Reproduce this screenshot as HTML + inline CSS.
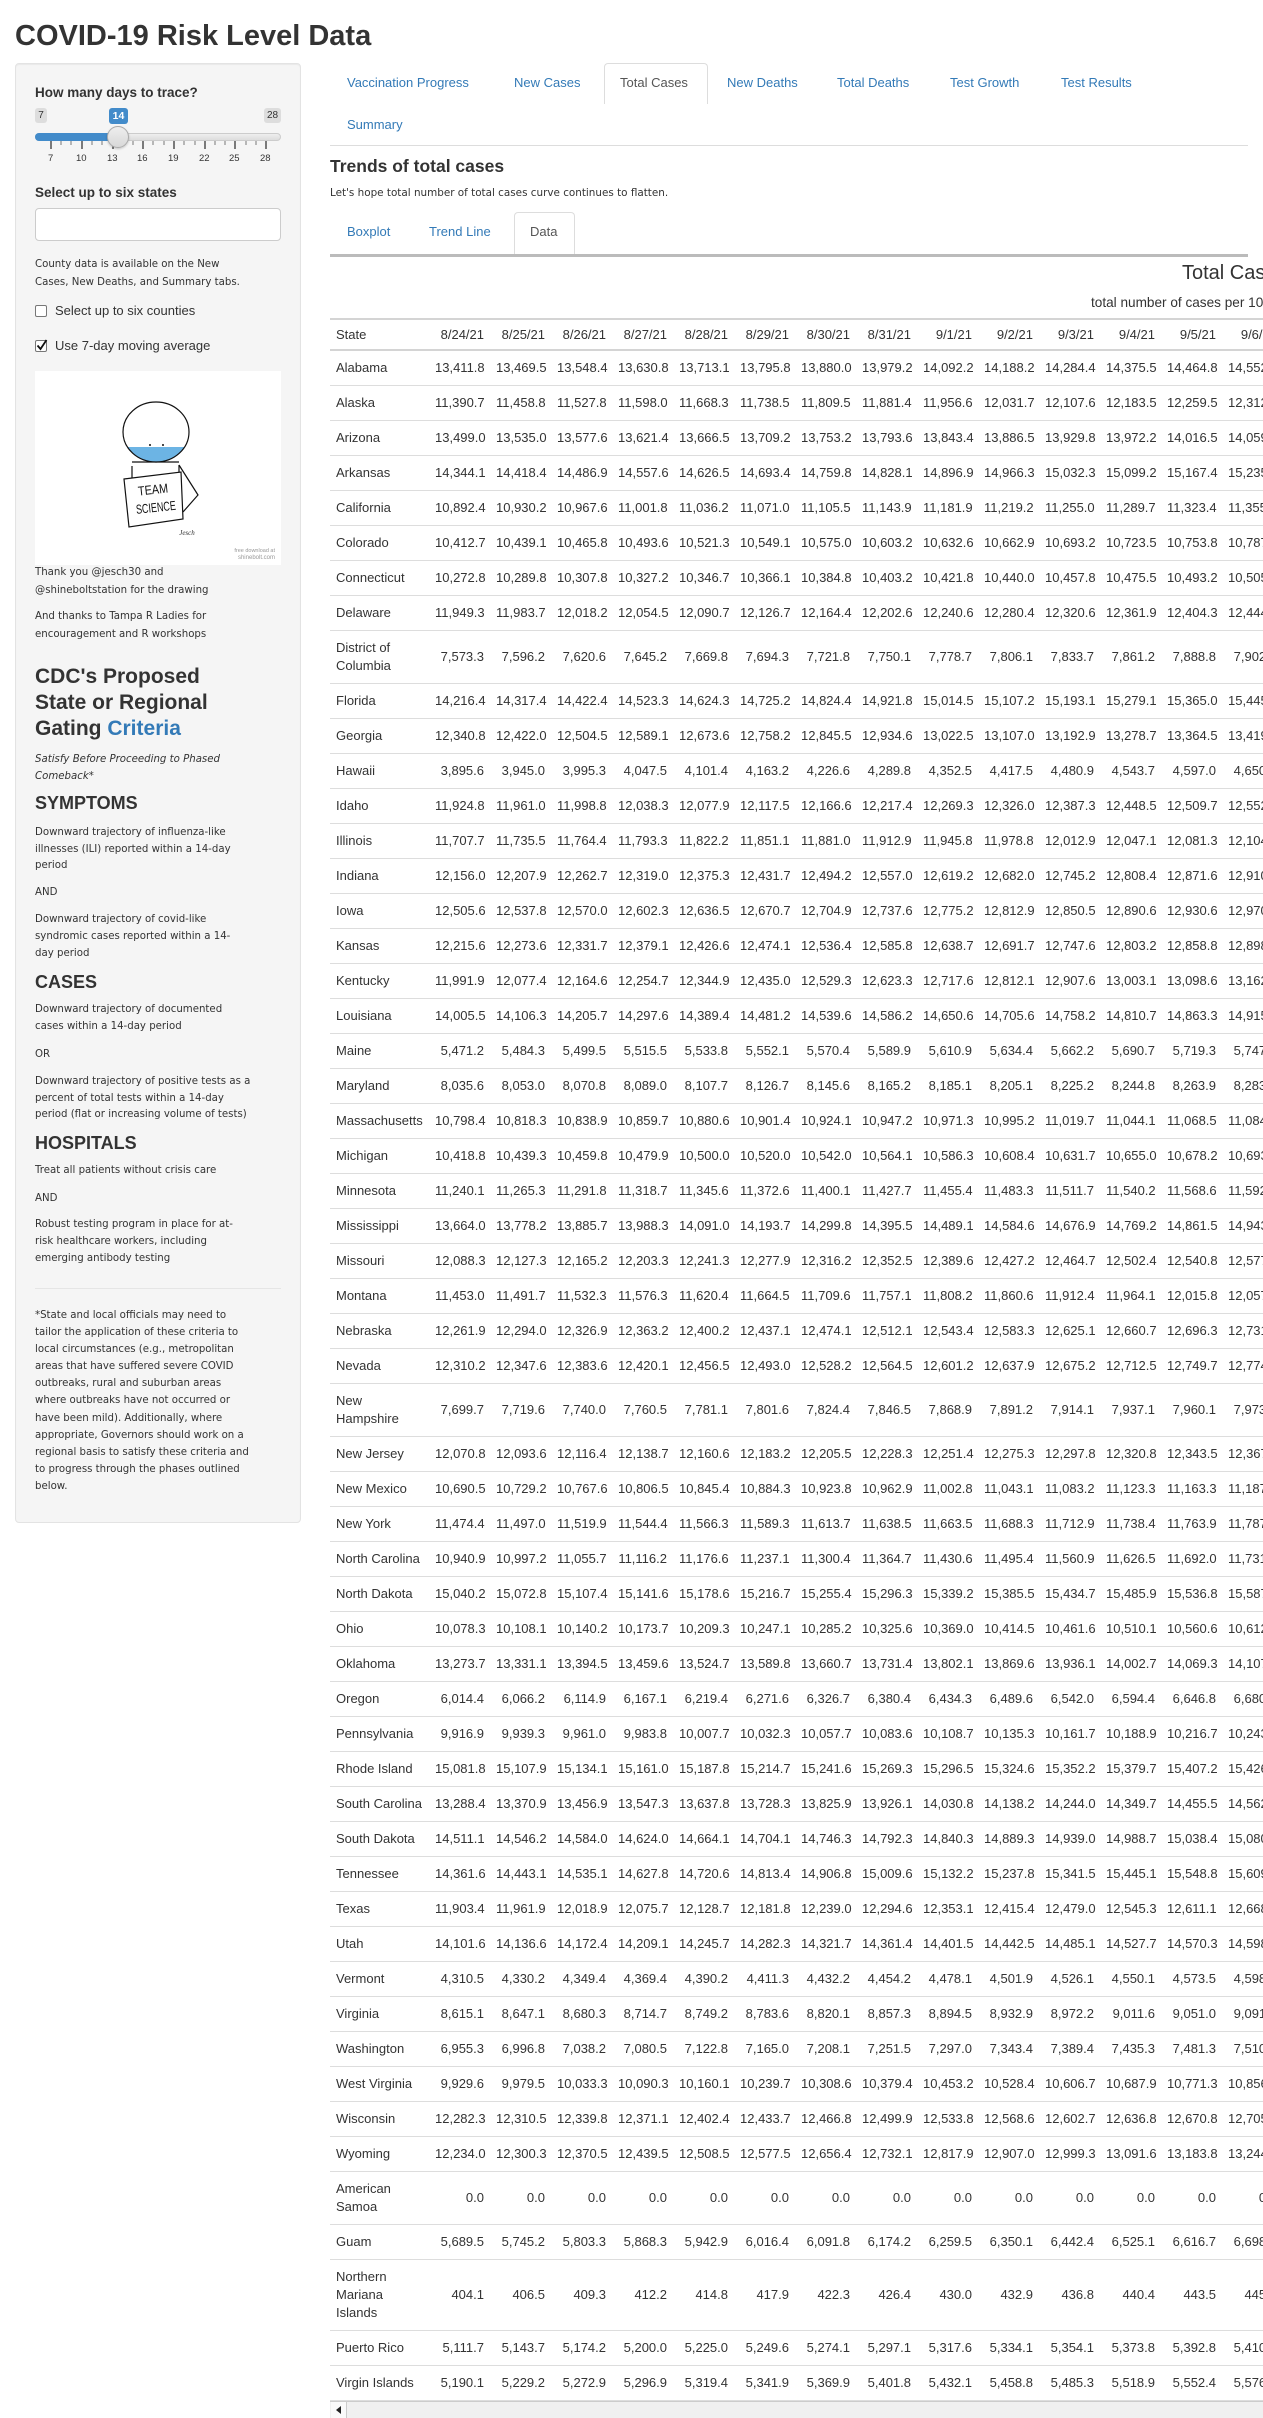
<!DOCTYPE html>
<html><head><meta charset="utf-8">
<style>
*{box-sizing:border-box}
html,body{margin:0;padding:0}
body{width:1263px;height:2418px;overflow:hidden;position:relative;background:#fff;color:#333;font-family:"Liberation Sans",Arial,sans-serif}
.a{position:absolute;white-space:nowrap}
.lu{font-family:"DejaVu Sans",sans-serif;font-size:10.2px;line-height:17px;color:#333}
.h{font-family:"Liberation Sans",Arial,sans-serif;font-weight:bold;color:#333}
.tab{position:absolute;font-size:13px;color:#337ab7;line-height:18px;white-space:nowrap}
.tabbox{position:absolute;border:1px solid #ddd;border-bottom:none;border-radius:4px 4px 0 0;background:#fff}
#tw{position:absolute;left:330px;top:318px;width:933px;height:2084px;overflow:hidden}
table{border-collapse:collapse;table-layout:fixed;width:953px;font-family:"Liberation Sans",Arial,sans-serif;font-size:13px;color:#333}
col.s{width:99px}col.d{width:61px}
th{font-weight:normal;text-align:right;padding:6px 6px 5px;line-height:18px;border-top:2px solid #d4d4d4;border-bottom:2px solid #d4d4d4;white-space:nowrap}
th:first-child{text-align:left}
td{text-align:right;padding:8px 6px;line-height:18px;border-bottom:1px solid #ddd;white-space:nowrap}
td:first-child{text-align:left;white-space:normal}
</style></head><body>

<div class="a h" style="left:15px;top:18px;font-size:29px;line-height:36px">COVID-19 Risk Level Data</div>

<!-- sidebar -->
<div class="a" style="left:15px;top:63px;width:286px;height:1460px;background:#f5f5f5;border:1px solid #e3e3e3;border-radius:4px;box-shadow:inset 0 1px 1px rgba(0,0,0,.05)"></div>
<div class="a h" style="left:35px;top:84px;font-size:13.5px;line-height:18px">How many days to trace?</div>
<div class="a" style="left:35px;top:108px;width:12px;height:15px;background:#ddd;border-radius:3px;font-size:10px;line-height:15px;text-align:center;color:#333">7</div>
<div class="a" style="left:109px;top:108px;width:19px;height:16px;background:#428bca;border-radius:3px;font-size:10.5px;line-height:16px;text-align:center;color:#fff;font-weight:bold">14</div>
<div class="a" style="left:264px;top:108px;width:17px;height:15px;background:#ddd;border-radius:3px;font-size:10px;line-height:15px;text-align:center;color:#333">28</div>
<div class="a" style="left:35px;top:133px;width:246px;height:8px;background:linear-gradient(#eee,#ddd);border:1px solid #ccc;border-radius:4px"></div>
<div class="a" style="left:35px;top:133px;width:84px;height:8px;background:#428bca;border-radius:4px 0 0 4px"></div>
<svg class="a" style="left:35px;top:140px" width="250" height="12">
<g stroke="#000" stroke-width="1">
<path d="M16 1v8M47 1v8M78 1v8M108 1v8M139 1v8M170 1v8M200 1v8M231 1v8"/>
<path stroke="#777" d="M26 1v4M36 1v4M57 1v4M67 1v4M88 1v4M98 1v4M118 1v4M129 1v4M149 1v4M160 1v4M180 1v4M190 1v4M211 1v4M221 1v4"/>
</g></svg>
<div class="a" style="left:107px;top:126px;width:22px;height:22px;border-radius:50%;background:linear-gradient(#eee,#d8d8d8);border:1px solid #aaa;box-shadow:0 1px 2px rgba(0,0,0,.2)"></div>
<div class="a" style="left:35px;top:153px;width:260px;font-size:9.5px;line-height:12px;color:#333">
<span class="a" style="left:13px">7</span><span class="a" style="left:41px">10</span><span class="a" style="left:72px">13</span><span class="a" style="left:102px">16</span><span class="a" style="left:133px">19</span><span class="a" style="left:164px">22</span><span class="a" style="left:194px">25</span><span class="a" style="left:225px">28</span></div>

<div class="a h" style="left:35px;top:184px;font-size:13.5px;line-height:18px">Select up to six states</div>
<div class="a" style="left:35px;top:208px;width:246px;height:33px;background:#fff;border:1px solid #ccc;border-radius:4px"></div>
<div class="a lu" style="left:35px;top:256px;line-height:18px">County data is available on the New<br>Cases, New Deaths, and Summary tabs.</div>
<div class="a" style="left:35px;top:305px;width:12px;height:12px;border:1px solid #777;background:#fff;border-radius:2px"></div>
<div class="a" style="left:55px;top:302px;font-size:13px;line-height:18px">Select up to six counties</div>
<div class="a" style="left:35px;top:340px;width:12px;height:12px;border:1px solid #777;background:#fff;border-radius:2px"></div>
<svg class="a" style="left:35px;top:338px" width="14" height="14"><path d="M2.5 7.5l3 3.5 6-9" fill="none" stroke="#111" stroke-width="1.8"/></svg>
<div class="a" style="left:55px;top:337px;font-size:13px;line-height:18px">Use 7-day moving average</div>

<svg class="a" style="left:35px;top:371px" width="246" height="194">
<rect width="246" height="194" fill="#fff"/>
<g fill="none" stroke="#111" stroke-width="1.2">
<path d="M97 95V108M144 94V101M97 91H144"/>
<path d="M144 94L163 124L148 141"/>
</g>
<path d="M92.4 76 A33 30 0 0 0 149.6 76 Z" fill="#6cb4e4"/>
<ellipse cx="121" cy="61" rx="33" ry="30" fill="none" stroke="#111" stroke-width="1.2"/>
<circle cx="115" cy="74" r="1" fill="#111"/><circle cx="128" cy="74" r="1" fill="#111"/>
<path d="M89 108L146 101L148 148L94 156Z" fill="#fff" stroke="#111" stroke-width="1.2"/>
<g transform="rotate(-6 119 128)" font-family="Liberation Sans Narrow,Liberation Sans,sans-serif" fill="#111" font-size="13" text-anchor="middle">
<text x="119" y="123" textLength="30" lengthAdjust="spacingAndGlyphs">TEAM</text>
<text x="120" y="141" textLength="40" lengthAdjust="spacingAndGlyphs">SCIENCE</text></g>
<text x="152" y="164" font-size="7" font-style="italic" fill="#333" text-anchor="middle" font-family="Liberation Serif,serif">Jesch</text>
<text x="240" y="181" font-size="5.5" fill="#999" text-anchor="end" font-family="Liberation Sans,sans-serif">free download at</text>
<text x="240" y="188" font-size="6" fill="#999" text-anchor="end" font-family="Liberation Sans,sans-serif">shinebolt.com</text>
</svg>

<div class="a lu" style="left:35px;top:564px;line-height:17.5px">Thank you @jesch30 and<br>@shineboltstation for the drawing</div>
<div class="a lu" style="left:35px;top:608px;line-height:17.5px">And thanks to Tampa R Ladies for<br>encouragement and R workshops</div>
<div class="a h" style="left:35px;top:664px;font-size:21px;line-height:26px">CDC's Proposed<br>State or Regional<br>Gating <span style="color:#337ab7">Criteria</span></div>
<div class="a lu" style="left:35px;top:751px;font-style:italic">Satisfy Before Proceeding to Phased<br>Comeback*</div>
<div class="a h" style="left:35px;top:792px;font-size:18px;line-height:22px">SYMPTOMS</div>
<div class="a lu" style="left:35px;top:825px;line-height:16.6px">Downward trajectory of influenza-like<br>illnesses (ILI) reported within a 14-day<br>period</div>
<div class="a lu" style="left:35px;top:884px">AND</div>
<div class="a lu" style="left:35px;top:912px;line-height:16.8px">Downward trajectory of covid-like<br>syndromic cases reported within a 14-<br>day period</div>
<div class="a h" style="left:35px;top:971px;font-size:18px;line-height:22px">CASES</div>
<div class="a lu" style="left:35px;top:1001px">Downward trajectory of documented<br>cases within a 14-day period</div>
<div class="a lu" style="left:35px;top:1046px">OR</div>
<div class="a lu" style="left:35px;top:1074px;line-height:16.6px">Downward trajectory of positive tests as a<br>percent of total tests within a 14-day<br>period (flat or increasing volume of tests)</div>
<div class="a h" style="left:35px;top:1132px;font-size:18px;line-height:22px">HOSPITALS</div>
<div class="a lu" style="left:35px;top:1162px">Treat all patients without crisis care</div>
<div class="a lu" style="left:35px;top:1190px">AND</div>
<div class="a lu" style="left:35px;top:1216px">Robust testing program in place for at-<br>risk healthcare workers, including<br>emerging antibody testing</div>
<div class="a" style="left:35px;top:1288px;width:246px;height:1px;background:#e5e5e5"></div>
<div class="a lu" style="left:35px;top:1307px;line-height:17.1px">*State and local officials may need to<br>tailor the application of these criteria to<br>local circumstances (e.g., metropolitan<br>areas that have suffered severe COVID<br>outbreaks, rural and suburban areas<br>where outbreaks have not occurred or<br>have been mild). Additionally, where<br>appropriate, Governors should work on a<br>regional basis to satisfy these criteria and<br>to progress through the phases outlined<br>below.</div>

<!-- main tabs -->
<div class="tabbox" style="left:604px;top:63px;width:104px;height:41px"></div>
<div class="tab" style="left:347px;top:74px">Vaccination Progress</div>
<div class="tab" style="left:514px;top:74px">New Cases</div>
<div class="tab" style="left:620px;top:74px;color:#555">Total Cases</div>
<div class="tab" style="left:727px;top:74px">New Deaths</div>
<div class="tab" style="left:837px;top:74px">Total Deaths</div>
<div class="tab" style="left:950px;top:74px">Test Growth</div>
<div class="tab" style="left:1061px;top:74px">Test Results</div>
<div class="tab" style="left:347px;top:116px">Summary</div>
<div class="a" style="left:330px;top:145px;width:918px;height:1px;background:#ddd"></div>

<div class="a h" style="left:330px;top:155px;font-size:17.5px;line-height:22px">Trends of total cases</div>
<div class="a lu" style="left:330px;top:185px;font-size:10.4px">Let's hope total number of total cases curve continues to flatten.</div>

<div class="tabbox" style="left:514px;top:212px;width:61px;height:43px"></div>
<div class="tab" style="left:347px;top:223px">Boxplot</div>
<div class="tab" style="left:429px;top:223px">Trend Line</div>
<div class="tab" style="left:530px;top:223px;color:#555">Data</div>
<div class="a" style="left:330px;top:254px;width:918px;height:3px;background:#bbb"></div>

<div class="a" style="left:1000px;top:258px;width:263px;height:58px;overflow:hidden">
<div class="a" style="left:182px;top:3px;font-size:20px;line-height:24px;color:#333">Total Cases</div>
<div class="a" style="left:91px;top:36px;font-size:13.6px;line-height:17px;color:#333">total number of cases per 100,000 people</div>
</div>

<div id="tw"><table>
<colgroup><col class="s"><col class="d"><col class="d"><col class="d"><col class="d"><col class="d"><col class="d"><col class="d"><col class="d"><col class="d"><col class="d"><col class="d"><col class="d"><col class="d"><col class="d"></colgroup>
<thead><tr><th>State</th><th>8/24/21</th><th>8/25/21</th><th>8/26/21</th><th>8/27/21</th><th>8/28/21</th><th>8/29/21</th><th>8/30/21</th><th>8/31/21</th><th>9/1/21</th><th>9/2/21</th><th>9/3/21</th><th>9/4/21</th><th>9/5/21</th><th>9/6/21</th></tr></thead>
<tbody>
<tr><td>Alabama</td><td>13,411.8</td><td>13,469.5</td><td>13,548.4</td><td>13,630.8</td><td>13,713.1</td><td>13,795.8</td><td>13,880.0</td><td>13,979.2</td><td>14,092.2</td><td>14,188.2</td><td>14,284.4</td><td>14,375.5</td><td>14,464.8</td><td>14,552.1</td></tr>
<tr><td>Alaska</td><td>11,390.7</td><td>11,458.8</td><td>11,527.8</td><td>11,598.0</td><td>11,668.3</td><td>11,738.5</td><td>11,809.5</td><td>11,881.4</td><td>11,956.6</td><td>12,031.7</td><td>12,107.6</td><td>12,183.5</td><td>12,259.5</td><td>12,312.0</td></tr>
<tr><td>Arizona</td><td>13,499.0</td><td>13,535.0</td><td>13,577.6</td><td>13,621.4</td><td>13,666.5</td><td>13,709.2</td><td>13,753.2</td><td>13,793.6</td><td>13,843.4</td><td>13,886.5</td><td>13,929.8</td><td>13,972.2</td><td>14,016.5</td><td>14,059.0</td></tr>
<tr><td>Arkansas</td><td>14,344.1</td><td>14,418.4</td><td>14,486.9</td><td>14,557.6</td><td>14,626.5</td><td>14,693.4</td><td>14,759.8</td><td>14,828.1</td><td>14,896.9</td><td>14,966.3</td><td>15,032.3</td><td>15,099.2</td><td>15,167.4</td><td>15,235.0</td></tr>
<tr><td>California</td><td>10,892.4</td><td>10,930.2</td><td>10,967.6</td><td>11,001.8</td><td>11,036.2</td><td>11,071.0</td><td>11,105.5</td><td>11,143.9</td><td>11,181.9</td><td>11,219.2</td><td>11,255.0</td><td>11,289.7</td><td>11,323.4</td><td>11,355.0</td></tr>
<tr><td>Colorado</td><td>10,412.7</td><td>10,439.1</td><td>10,465.8</td><td>10,493.6</td><td>10,521.3</td><td>10,549.1</td><td>10,575.0</td><td>10,603.2</td><td>10,632.6</td><td>10,662.9</td><td>10,693.2</td><td>10,723.5</td><td>10,753.8</td><td>10,787.0</td></tr>
<tr><td>Connecticut</td><td>10,272.8</td><td>10,289.8</td><td>10,307.8</td><td>10,327.2</td><td>10,346.7</td><td>10,366.1</td><td>10,384.8</td><td>10,403.2</td><td>10,421.8</td><td>10,440.0</td><td>10,457.8</td><td>10,475.5</td><td>10,493.2</td><td>10,505.0</td></tr>
<tr><td>Delaware</td><td>11,949.3</td><td>11,983.7</td><td>12,018.2</td><td>12,054.5</td><td>12,090.7</td><td>12,126.7</td><td>12,164.4</td><td>12,202.6</td><td>12,240.6</td><td>12,280.4</td><td>12,320.6</td><td>12,361.9</td><td>12,404.3</td><td>12,444.0</td></tr>
<tr><td>District of Columbia</td><td>7,573.3</td><td>7,596.2</td><td>7,620.6</td><td>7,645.2</td><td>7,669.8</td><td>7,694.3</td><td>7,721.8</td><td>7,750.1</td><td>7,778.7</td><td>7,806.1</td><td>7,833.7</td><td>7,861.2</td><td>7,888.8</td><td>7,902.0</td></tr>
<tr><td>Florida</td><td>14,216.4</td><td>14,317.4</td><td>14,422.4</td><td>14,523.3</td><td>14,624.3</td><td>14,725.2</td><td>14,824.4</td><td>14,921.8</td><td>15,014.5</td><td>15,107.2</td><td>15,193.1</td><td>15,279.1</td><td>15,365.0</td><td>15,445.0</td></tr>
<tr><td>Georgia</td><td>12,340.8</td><td>12,422.0</td><td>12,504.5</td><td>12,589.1</td><td>12,673.6</td><td>12,758.2</td><td>12,845.5</td><td>12,934.6</td><td>13,022.5</td><td>13,107.0</td><td>13,192.9</td><td>13,278.7</td><td>13,364.5</td><td>13,419.0</td></tr>
<tr><td>Hawaii</td><td>3,895.6</td><td>3,945.0</td><td>3,995.3</td><td>4,047.5</td><td>4,101.4</td><td>4,163.2</td><td>4,226.6</td><td>4,289.8</td><td>4,352.5</td><td>4,417.5</td><td>4,480.9</td><td>4,543.7</td><td>4,597.0</td><td>4,650.0</td></tr>
<tr><td>Idaho</td><td>11,924.8</td><td>11,961.0</td><td>11,998.8</td><td>12,038.3</td><td>12,077.9</td><td>12,117.5</td><td>12,166.6</td><td>12,217.4</td><td>12,269.3</td><td>12,326.0</td><td>12,387.3</td><td>12,448.5</td><td>12,509.7</td><td>12,552.0</td></tr>
<tr><td>Illinois</td><td>11,707.7</td><td>11,735.5</td><td>11,764.4</td><td>11,793.3</td><td>11,822.2</td><td>11,851.1</td><td>11,881.0</td><td>11,912.9</td><td>11,945.8</td><td>11,978.8</td><td>12,012.9</td><td>12,047.1</td><td>12,081.3</td><td>12,104.0</td></tr>
<tr><td>Indiana</td><td>12,156.0</td><td>12,207.9</td><td>12,262.7</td><td>12,319.0</td><td>12,375.3</td><td>12,431.7</td><td>12,494.2</td><td>12,557.0</td><td>12,619.2</td><td>12,682.0</td><td>12,745.2</td><td>12,808.4</td><td>12,871.6</td><td>12,910.0</td></tr>
<tr><td>Iowa</td><td>12,505.6</td><td>12,537.8</td><td>12,570.0</td><td>12,602.3</td><td>12,636.5</td><td>12,670.7</td><td>12,704.9</td><td>12,737.6</td><td>12,775.2</td><td>12,812.9</td><td>12,850.5</td><td>12,890.6</td><td>12,930.6</td><td>12,970.0</td></tr>
<tr><td>Kansas</td><td>12,215.6</td><td>12,273.6</td><td>12,331.7</td><td>12,379.1</td><td>12,426.6</td><td>12,474.1</td><td>12,536.4</td><td>12,585.8</td><td>12,638.7</td><td>12,691.7</td><td>12,747.6</td><td>12,803.2</td><td>12,858.8</td><td>12,898.0</td></tr>
<tr><td>Kentucky</td><td>11,991.9</td><td>12,077.4</td><td>12,164.6</td><td>12,254.7</td><td>12,344.9</td><td>12,435.0</td><td>12,529.3</td><td>12,623.3</td><td>12,717.6</td><td>12,812.1</td><td>12,907.6</td><td>13,003.1</td><td>13,098.6</td><td>13,162.0</td></tr>
<tr><td>Louisiana</td><td>14,005.5</td><td>14,106.3</td><td>14,205.7</td><td>14,297.6</td><td>14,389.4</td><td>14,481.2</td><td>14,539.6</td><td>14,586.2</td><td>14,650.6</td><td>14,705.6</td><td>14,758.2</td><td>14,810.7</td><td>14,863.3</td><td>14,915.0</td></tr>
<tr><td>Maine</td><td>5,471.2</td><td>5,484.3</td><td>5,499.5</td><td>5,515.5</td><td>5,533.8</td><td>5,552.1</td><td>5,570.4</td><td>5,589.9</td><td>5,610.9</td><td>5,634.4</td><td>5,662.2</td><td>5,690.7</td><td>5,719.3</td><td>5,747.0</td></tr>
<tr><td>Maryland</td><td>8,035.6</td><td>8,053.0</td><td>8,070.8</td><td>8,089.0</td><td>8,107.7</td><td>8,126.7</td><td>8,145.6</td><td>8,165.2</td><td>8,185.1</td><td>8,205.1</td><td>8,225.2</td><td>8,244.8</td><td>8,263.9</td><td>8,283.0</td></tr>
<tr><td>Massachusetts</td><td>10,798.4</td><td>10,818.3</td><td>10,838.9</td><td>10,859.7</td><td>10,880.6</td><td>10,901.4</td><td>10,924.1</td><td>10,947.2</td><td>10,971.3</td><td>10,995.2</td><td>11,019.7</td><td>11,044.1</td><td>11,068.5</td><td>11,084.0</td></tr>
<tr><td>Michigan</td><td>10,418.8</td><td>10,439.3</td><td>10,459.8</td><td>10,479.9</td><td>10,500.0</td><td>10,520.0</td><td>10,542.0</td><td>10,564.1</td><td>10,586.3</td><td>10,608.4</td><td>10,631.7</td><td>10,655.0</td><td>10,678.2</td><td>10,693.0</td></tr>
<tr><td>Minnesota</td><td>11,240.1</td><td>11,265.3</td><td>11,291.8</td><td>11,318.7</td><td>11,345.6</td><td>11,372.6</td><td>11,400.1</td><td>11,427.7</td><td>11,455.4</td><td>11,483.3</td><td>11,511.7</td><td>11,540.2</td><td>11,568.6</td><td>11,592.0</td></tr>
<tr><td>Mississippi</td><td>13,664.0</td><td>13,778.2</td><td>13,885.7</td><td>13,988.3</td><td>14,091.0</td><td>14,193.7</td><td>14,299.8</td><td>14,395.5</td><td>14,489.1</td><td>14,584.6</td><td>14,676.9</td><td>14,769.2</td><td>14,861.5</td><td>14,943.0</td></tr>
<tr><td>Missouri</td><td>12,088.3</td><td>12,127.3</td><td>12,165.2</td><td>12,203.3</td><td>12,241.3</td><td>12,277.9</td><td>12,316.2</td><td>12,352.5</td><td>12,389.6</td><td>12,427.2</td><td>12,464.7</td><td>12,502.4</td><td>12,540.8</td><td>12,577.0</td></tr>
<tr><td>Montana</td><td>11,453.0</td><td>11,491.7</td><td>11,532.3</td><td>11,576.3</td><td>11,620.4</td><td>11,664.5</td><td>11,709.6</td><td>11,757.1</td><td>11,808.2</td><td>11,860.6</td><td>11,912.4</td><td>11,964.1</td><td>12,015.8</td><td>12,057.0</td></tr>
<tr><td>Nebraska</td><td>12,261.9</td><td>12,294.0</td><td>12,326.9</td><td>12,363.2</td><td>12,400.2</td><td>12,437.1</td><td>12,474.1</td><td>12,512.1</td><td>12,543.4</td><td>12,583.3</td><td>12,625.1</td><td>12,660.7</td><td>12,696.3</td><td>12,731.0</td></tr>
<tr><td>Nevada</td><td>12,310.2</td><td>12,347.6</td><td>12,383.6</td><td>12,420.1</td><td>12,456.5</td><td>12,493.0</td><td>12,528.2</td><td>12,564.5</td><td>12,601.2</td><td>12,637.9</td><td>12,675.2</td><td>12,712.5</td><td>12,749.7</td><td>12,774.0</td></tr>
<tr><td>New Hampshire</td><td>7,699.7</td><td>7,719.6</td><td>7,740.0</td><td>7,760.5</td><td>7,781.1</td><td>7,801.6</td><td>7,824.4</td><td>7,846.5</td><td>7,868.9</td><td>7,891.2</td><td>7,914.1</td><td>7,937.1</td><td>7,960.1</td><td>7,973.0</td></tr>
<tr><td>New Jersey</td><td>12,070.8</td><td>12,093.6</td><td>12,116.4</td><td>12,138.7</td><td>12,160.6</td><td>12,183.2</td><td>12,205.5</td><td>12,228.3</td><td>12,251.4</td><td>12,275.3</td><td>12,297.8</td><td>12,320.8</td><td>12,343.5</td><td>12,367.0</td></tr>
<tr><td>New Mexico</td><td>10,690.5</td><td>10,729.2</td><td>10,767.6</td><td>10,806.5</td><td>10,845.4</td><td>10,884.3</td><td>10,923.8</td><td>10,962.9</td><td>11,002.8</td><td>11,043.1</td><td>11,083.2</td><td>11,123.3</td><td>11,163.3</td><td>11,187.0</td></tr>
<tr><td>New York</td><td>11,474.4</td><td>11,497.0</td><td>11,519.9</td><td>11,544.4</td><td>11,566.3</td><td>11,589.3</td><td>11,613.7</td><td>11,638.5</td><td>11,663.5</td><td>11,688.3</td><td>11,712.9</td><td>11,738.4</td><td>11,763.9</td><td>11,787.0</td></tr>
<tr><td>North Carolina</td><td>10,940.9</td><td>10,997.2</td><td>11,055.7</td><td>11,116.2</td><td>11,176.6</td><td>11,237.1</td><td>11,300.4</td><td>11,364.7</td><td>11,430.6</td><td>11,495.4</td><td>11,560.9</td><td>11,626.5</td><td>11,692.0</td><td>11,731.0</td></tr>
<tr><td>North Dakota</td><td>15,040.2</td><td>15,072.8</td><td>15,107.4</td><td>15,141.6</td><td>15,178.6</td><td>15,216.7</td><td>15,255.4</td><td>15,296.3</td><td>15,339.2</td><td>15,385.5</td><td>15,434.7</td><td>15,485.9</td><td>15,536.8</td><td>15,587.0</td></tr>
<tr><td>Ohio</td><td>10,078.3</td><td>10,108.1</td><td>10,140.2</td><td>10,173.7</td><td>10,209.3</td><td>10,247.1</td><td>10,285.2</td><td>10,325.6</td><td>10,369.0</td><td>10,414.5</td><td>10,461.6</td><td>10,510.1</td><td>10,560.6</td><td>10,612.0</td></tr>
<tr><td>Oklahoma</td><td>13,273.7</td><td>13,331.1</td><td>13,394.5</td><td>13,459.6</td><td>13,524.7</td><td>13,589.8</td><td>13,660.7</td><td>13,731.4</td><td>13,802.1</td><td>13,869.6</td><td>13,936.1</td><td>14,002.7</td><td>14,069.3</td><td>14,107.0</td></tr>
<tr><td>Oregon</td><td>6,014.4</td><td>6,066.2</td><td>6,114.9</td><td>6,167.1</td><td>6,219.4</td><td>6,271.6</td><td>6,326.7</td><td>6,380.4</td><td>6,434.3</td><td>6,489.6</td><td>6,542.0</td><td>6,594.4</td><td>6,646.8</td><td>6,680.0</td></tr>
<tr><td>Pennsylvania</td><td>9,916.9</td><td>9,939.3</td><td>9,961.0</td><td>9,983.8</td><td>10,007.7</td><td>10,032.3</td><td>10,057.7</td><td>10,083.6</td><td>10,108.7</td><td>10,135.3</td><td>10,161.7</td><td>10,188.9</td><td>10,216.7</td><td>10,243.0</td></tr>
<tr><td>Rhode Island</td><td>15,081.8</td><td>15,107.9</td><td>15,134.1</td><td>15,161.0</td><td>15,187.8</td><td>15,214.7</td><td>15,241.6</td><td>15,269.3</td><td>15,296.5</td><td>15,324.6</td><td>15,352.2</td><td>15,379.7</td><td>15,407.2</td><td>15,426.0</td></tr>
<tr><td>South Carolina</td><td>13,288.4</td><td>13,370.9</td><td>13,456.9</td><td>13,547.3</td><td>13,637.8</td><td>13,728.3</td><td>13,825.9</td><td>13,926.1</td><td>14,030.8</td><td>14,138.2</td><td>14,244.0</td><td>14,349.7</td><td>14,455.5</td><td>14,562.0</td></tr>
<tr><td>South Dakota</td><td>14,511.1</td><td>14,546.2</td><td>14,584.0</td><td>14,624.0</td><td>14,664.1</td><td>14,704.1</td><td>14,746.3</td><td>14,792.3</td><td>14,840.3</td><td>14,889.3</td><td>14,939.0</td><td>14,988.7</td><td>15,038.4</td><td>15,080.0</td></tr>
<tr><td>Tennessee</td><td>14,361.6</td><td>14,443.1</td><td>14,535.1</td><td>14,627.8</td><td>14,720.6</td><td>14,813.4</td><td>14,906.8</td><td>15,009.6</td><td>15,132.2</td><td>15,237.8</td><td>15,341.5</td><td>15,445.1</td><td>15,548.8</td><td>15,609.0</td></tr>
<tr><td>Texas</td><td>11,903.4</td><td>11,961.9</td><td>12,018.9</td><td>12,075.7</td><td>12,128.7</td><td>12,181.8</td><td>12,239.0</td><td>12,294.6</td><td>12,353.1</td><td>12,415.4</td><td>12,479.0</td><td>12,545.3</td><td>12,611.1</td><td>12,668.0</td></tr>
<tr><td>Utah</td><td>14,101.6</td><td>14,136.6</td><td>14,172.4</td><td>14,209.1</td><td>14,245.7</td><td>14,282.3</td><td>14,321.7</td><td>14,361.4</td><td>14,401.5</td><td>14,442.5</td><td>14,485.1</td><td>14,527.7</td><td>14,570.3</td><td>14,598.0</td></tr>
<tr><td>Vermont</td><td>4,310.5</td><td>4,330.2</td><td>4,349.4</td><td>4,369.4</td><td>4,390.2</td><td>4,411.3</td><td>4,432.2</td><td>4,454.2</td><td>4,478.1</td><td>4,501.9</td><td>4,526.1</td><td>4,550.1</td><td>4,573.5</td><td>4,598.0</td></tr>
<tr><td>Virginia</td><td>8,615.1</td><td>8,647.1</td><td>8,680.3</td><td>8,714.7</td><td>8,749.2</td><td>8,783.6</td><td>8,820.1</td><td>8,857.3</td><td>8,894.5</td><td>8,932.9</td><td>8,972.2</td><td>9,011.6</td><td>9,051.0</td><td>9,091.0</td></tr>
<tr><td>Washington</td><td>6,955.3</td><td>6,996.8</td><td>7,038.2</td><td>7,080.5</td><td>7,122.8</td><td>7,165.0</td><td>7,208.1</td><td>7,251.5</td><td>7,297.0</td><td>7,343.4</td><td>7,389.4</td><td>7,435.3</td><td>7,481.3</td><td>7,510.0</td></tr>
<tr><td>West Virginia</td><td>9,929.6</td><td>9,979.5</td><td>10,033.3</td><td>10,090.3</td><td>10,160.1</td><td>10,239.7</td><td>10,308.6</td><td>10,379.4</td><td>10,453.2</td><td>10,528.4</td><td>10,606.7</td><td>10,687.9</td><td>10,771.3</td><td>10,856.0</td></tr>
<tr><td>Wisconsin</td><td>12,282.3</td><td>12,310.5</td><td>12,339.8</td><td>12,371.1</td><td>12,402.4</td><td>12,433.7</td><td>12,466.8</td><td>12,499.9</td><td>12,533.8</td><td>12,568.6</td><td>12,602.7</td><td>12,636.8</td><td>12,670.8</td><td>12,705.0</td></tr>
<tr><td>Wyoming</td><td>12,234.0</td><td>12,300.3</td><td>12,370.5</td><td>12,439.5</td><td>12,508.5</td><td>12,577.5</td><td>12,656.4</td><td>12,732.1</td><td>12,817.9</td><td>12,907.0</td><td>12,999.3</td><td>13,091.6</td><td>13,183.8</td><td>13,244.0</td></tr>
<tr><td>American Samoa</td><td>0.0</td><td>0.0</td><td>0.0</td><td>0.0</td><td>0.0</td><td>0.0</td><td>0.0</td><td>0.0</td><td>0.0</td><td>0.0</td><td>0.0</td><td>0.0</td><td>0.0</td><td>0.0</td></tr>
<tr><td>Guam</td><td>5,689.5</td><td>5,745.2</td><td>5,803.3</td><td>5,868.3</td><td>5,942.9</td><td>6,016.4</td><td>6,091.8</td><td>6,174.2</td><td>6,259.5</td><td>6,350.1</td><td>6,442.4</td><td>6,525.1</td><td>6,616.7</td><td>6,698.0</td></tr>
<tr><td>Northern Mariana Islands</td><td>404.1</td><td>406.5</td><td>409.3</td><td>412.2</td><td>414.8</td><td>417.9</td><td>422.3</td><td>426.4</td><td>430.0</td><td>432.9</td><td>436.8</td><td>440.4</td><td>443.5</td><td>445.9</td></tr>
<tr><td>Puerto Rico</td><td>5,111.7</td><td>5,143.7</td><td>5,174.2</td><td>5,200.0</td><td>5,225.0</td><td>5,249.6</td><td>5,274.1</td><td>5,297.1</td><td>5,317.6</td><td>5,334.1</td><td>5,354.1</td><td>5,373.8</td><td>5,392.8</td><td>5,410.0</td></tr>
<tr><td>Virgin Islands</td><td>5,190.1</td><td>5,229.2</td><td>5,272.9</td><td>5,296.9</td><td>5,319.4</td><td>5,341.9</td><td>5,369.9</td><td>5,401.8</td><td>5,432.1</td><td>5,458.8</td><td>5,485.3</td><td>5,518.9</td><td>5,552.4</td><td>5,576.0</td></tr>
</tbody></table></div>

<!-- scrollbar -->
<div class="a" style="left:330px;top:2401px;width:933px;height:17px;background:#f0f0f0;border-top:1px solid #ccc"></div>
<div class="a" style="left:331px;top:2402px;width:16px;height:16px;background:#fafafa;border-right:1px solid #ccc"></div>
<svg class="a" style="left:334px;top:2405px" width="10" height="10"><path d="M7 1L2 5L7 9Z" fill="#222"/></svg>
</body></html>
